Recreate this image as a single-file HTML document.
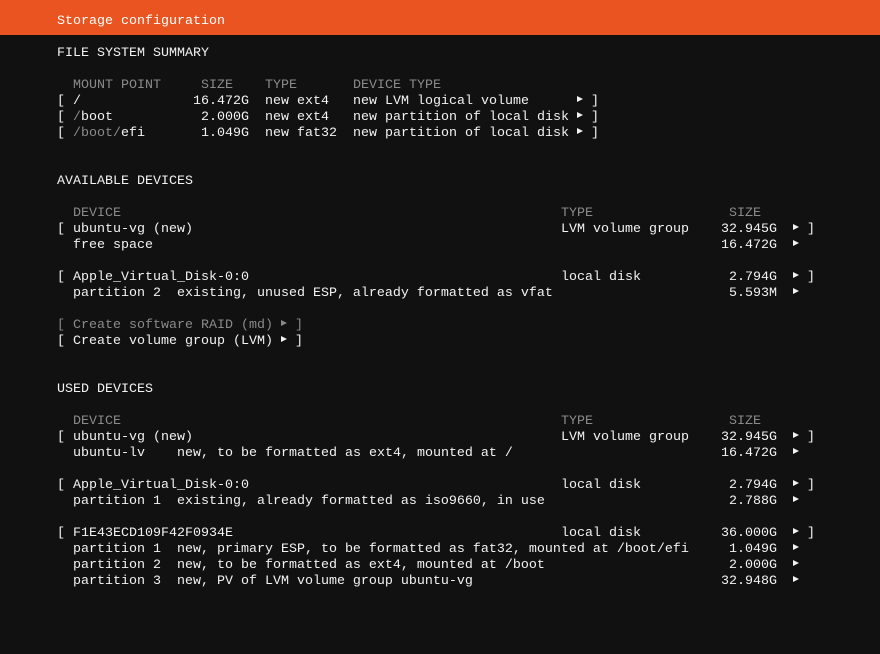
<!DOCTYPE html>
<html><head><meta charset="utf-8"><style>
html,body{margin:0;padding:0;}
body{width:880px;height:654px;background:#111111;position:relative;overflow:hidden;font-family:"Liberation Mono","DejaVu Sans Mono",monospace;font-size:13.33px;color:#f2f2f2;}
.bar{position:absolute;left:0;top:0;width:880px;height:35px;background:#e95420;}
.w{position:absolute;left:0;top:2px;width:880px;height:650px;}
.r{position:absolute;height:16px;line-height:16px;white-space:pre;}
.g{color:#8a8a8a;}
.t{display:inline-block;width:0;height:0;border-left:6px solid currentColor;border-top:3.5px solid transparent;border-bottom:3.5px solid transparent;vertical-align:middle;margin-top:-2px;}
</style></head><body>
<div class="bar"></div>
<div class="w">
<div class="r" style="top:12px;left:57px;color:#fff">Storage configuration</div>
<div class="r" style="top:44px;left:57px">FILE SYSTEM SUMMARY</div>

<div class="r g" style="top:76px;left:73px">MOUNT POINT</div><div class="r g" style="top:76px;left:201px">SIZE</div><div class="r g" style="top:76px;left:265px">TYPE</div><div class="r g" style="top:76px;left:353px">DEVICE TYPE</div>

<div class="r" style="top:92px;left:57px">[ /</div><div class="r" style="top:92px;left:193px">16.472G</div><div class="r" style="top:92px;left:265px">new ext4</div><div class="r" style="top:92px;left:353px">new LVM logical volume</div><div class="r" style="top:92px;left:577px"><span class="t"></span> ]</div>

<div class="r" style="top:108px;left:57px">[ <span class="g">/</span>boot</div><div class="r" style="top:108px;left:201px">2.000G</div><div class="r" style="top:108px;left:265px">new ext4</div><div class="r" style="top:108px;left:353px">new partition of local disk</div><div class="r" style="top:108px;left:577px"><span class="t"></span> ]</div>

<div class="r" style="top:124px;left:57px">[ <span class="g">/boot/</span>efi</div><div class="r" style="top:124px;left:201px">1.049G</div><div class="r" style="top:124px;left:265px">new fat32</div><div class="r" style="top:124px;left:353px">new partition of local disk</div><div class="r" style="top:124px;left:577px"><span class="t"></span> ]</div>

<div class="r" style="top:172px;left:57px">AVAILABLE DEVICES</div>
<div class="r g" style="top:204px;left:73px">DEVICE</div><div class="r g" style="top:204px;left:561px">TYPE</div><div class="r g" style="top:204px;left:729px">SIZE</div>
<div class="r" style="top:220px;left:57px">[ ubuntu-vg (new)</div><div class="r" style="top:220px;left:561px">LVM volume group</div><div class="r" style="top:220px;left:721px">32.945G  <span class="t"></span> ]</div>
<div class="r" style="top:236px;left:73px">free space</div><div class="r" style="top:236px;left:721px">16.472G  <span class="t"></span></div>
<div class="r" style="top:268px;left:57px">[ Apple_Virtual_Disk-0:0</div><div class="r" style="top:268px;left:561px">local disk</div><div class="r" style="top:268px;left:729px">2.794G  <span class="t"></span> ]</div>
<div class="r" style="top:284px;left:73px">partition 2  existing, unused ESP, already formatted as vfat</div><div class="r" style="top:284px;left:729px">5.593M  <span class="t"></span></div>
<div class="r g" style="top:316px;left:57px">[ Create software RAID (md) <span class="t"></span> ]</div>
<div class="r" style="top:332px;left:57px">[ Create volume group (LVM) <span class="t"></span> ]</div>

<div class="r" style="top:380px;left:57px">USED DEVICES</div>
<div class="r g" style="top:412px;left:73px">DEVICE</div><div class="r g" style="top:412px;left:561px">TYPE</div><div class="r g" style="top:412px;left:729px">SIZE</div>
<div class="r" style="top:428px;left:57px">[ ubuntu-vg (new)</div><div class="r" style="top:428px;left:561px">LVM volume group</div><div class="r" style="top:428px;left:721px">32.945G  <span class="t"></span> ]</div>
<div class="r" style="top:444px;left:73px">ubuntu-lv</div><div class="r" style="top:444px;left:177px">new, to be formatted as ext4, mounted at /</div><div class="r" style="top:444px;left:721px">16.472G  <span class="t"></span></div>
<div class="r" style="top:476px;left:57px">[ Apple_Virtual_Disk-0:0</div><div class="r" style="top:476px;left:561px">local disk</div><div class="r" style="top:476px;left:729px">2.794G  <span class="t"></span> ]</div>
<div class="r" style="top:492px;left:73px">partition 1  existing, already formatted as iso9660, in use</div><div class="r" style="top:492px;left:729px">2.788G  <span class="t"></span></div>
<div class="r" style="top:524px;left:57px">[ F1E43ECD109F42F0934E</div><div class="r" style="top:524px;left:561px">local disk</div><div class="r" style="top:524px;left:721px">36.000G  <span class="t"></span> ]</div>
<div class="r" style="top:540px;left:73px">partition 1  new, primary ESP, to be formatted as fat32, mounted at /boot/efi</div><div class="r" style="top:540px;left:729px">1.049G  <span class="t"></span></div>
<div class="r" style="top:556px;left:73px">partition 2  new, to be formatted as ext4, mounted at /boot</div><div class="r" style="top:556px;left:729px">2.000G  <span class="t"></span></div>
<div class="r" style="top:572px;left:73px">partition 3  new, PV of LVM volume group ubuntu-vg</div><div class="r" style="top:572px;left:721px">32.948G  <span class="t"></span></div>
</div>
</body></html>
